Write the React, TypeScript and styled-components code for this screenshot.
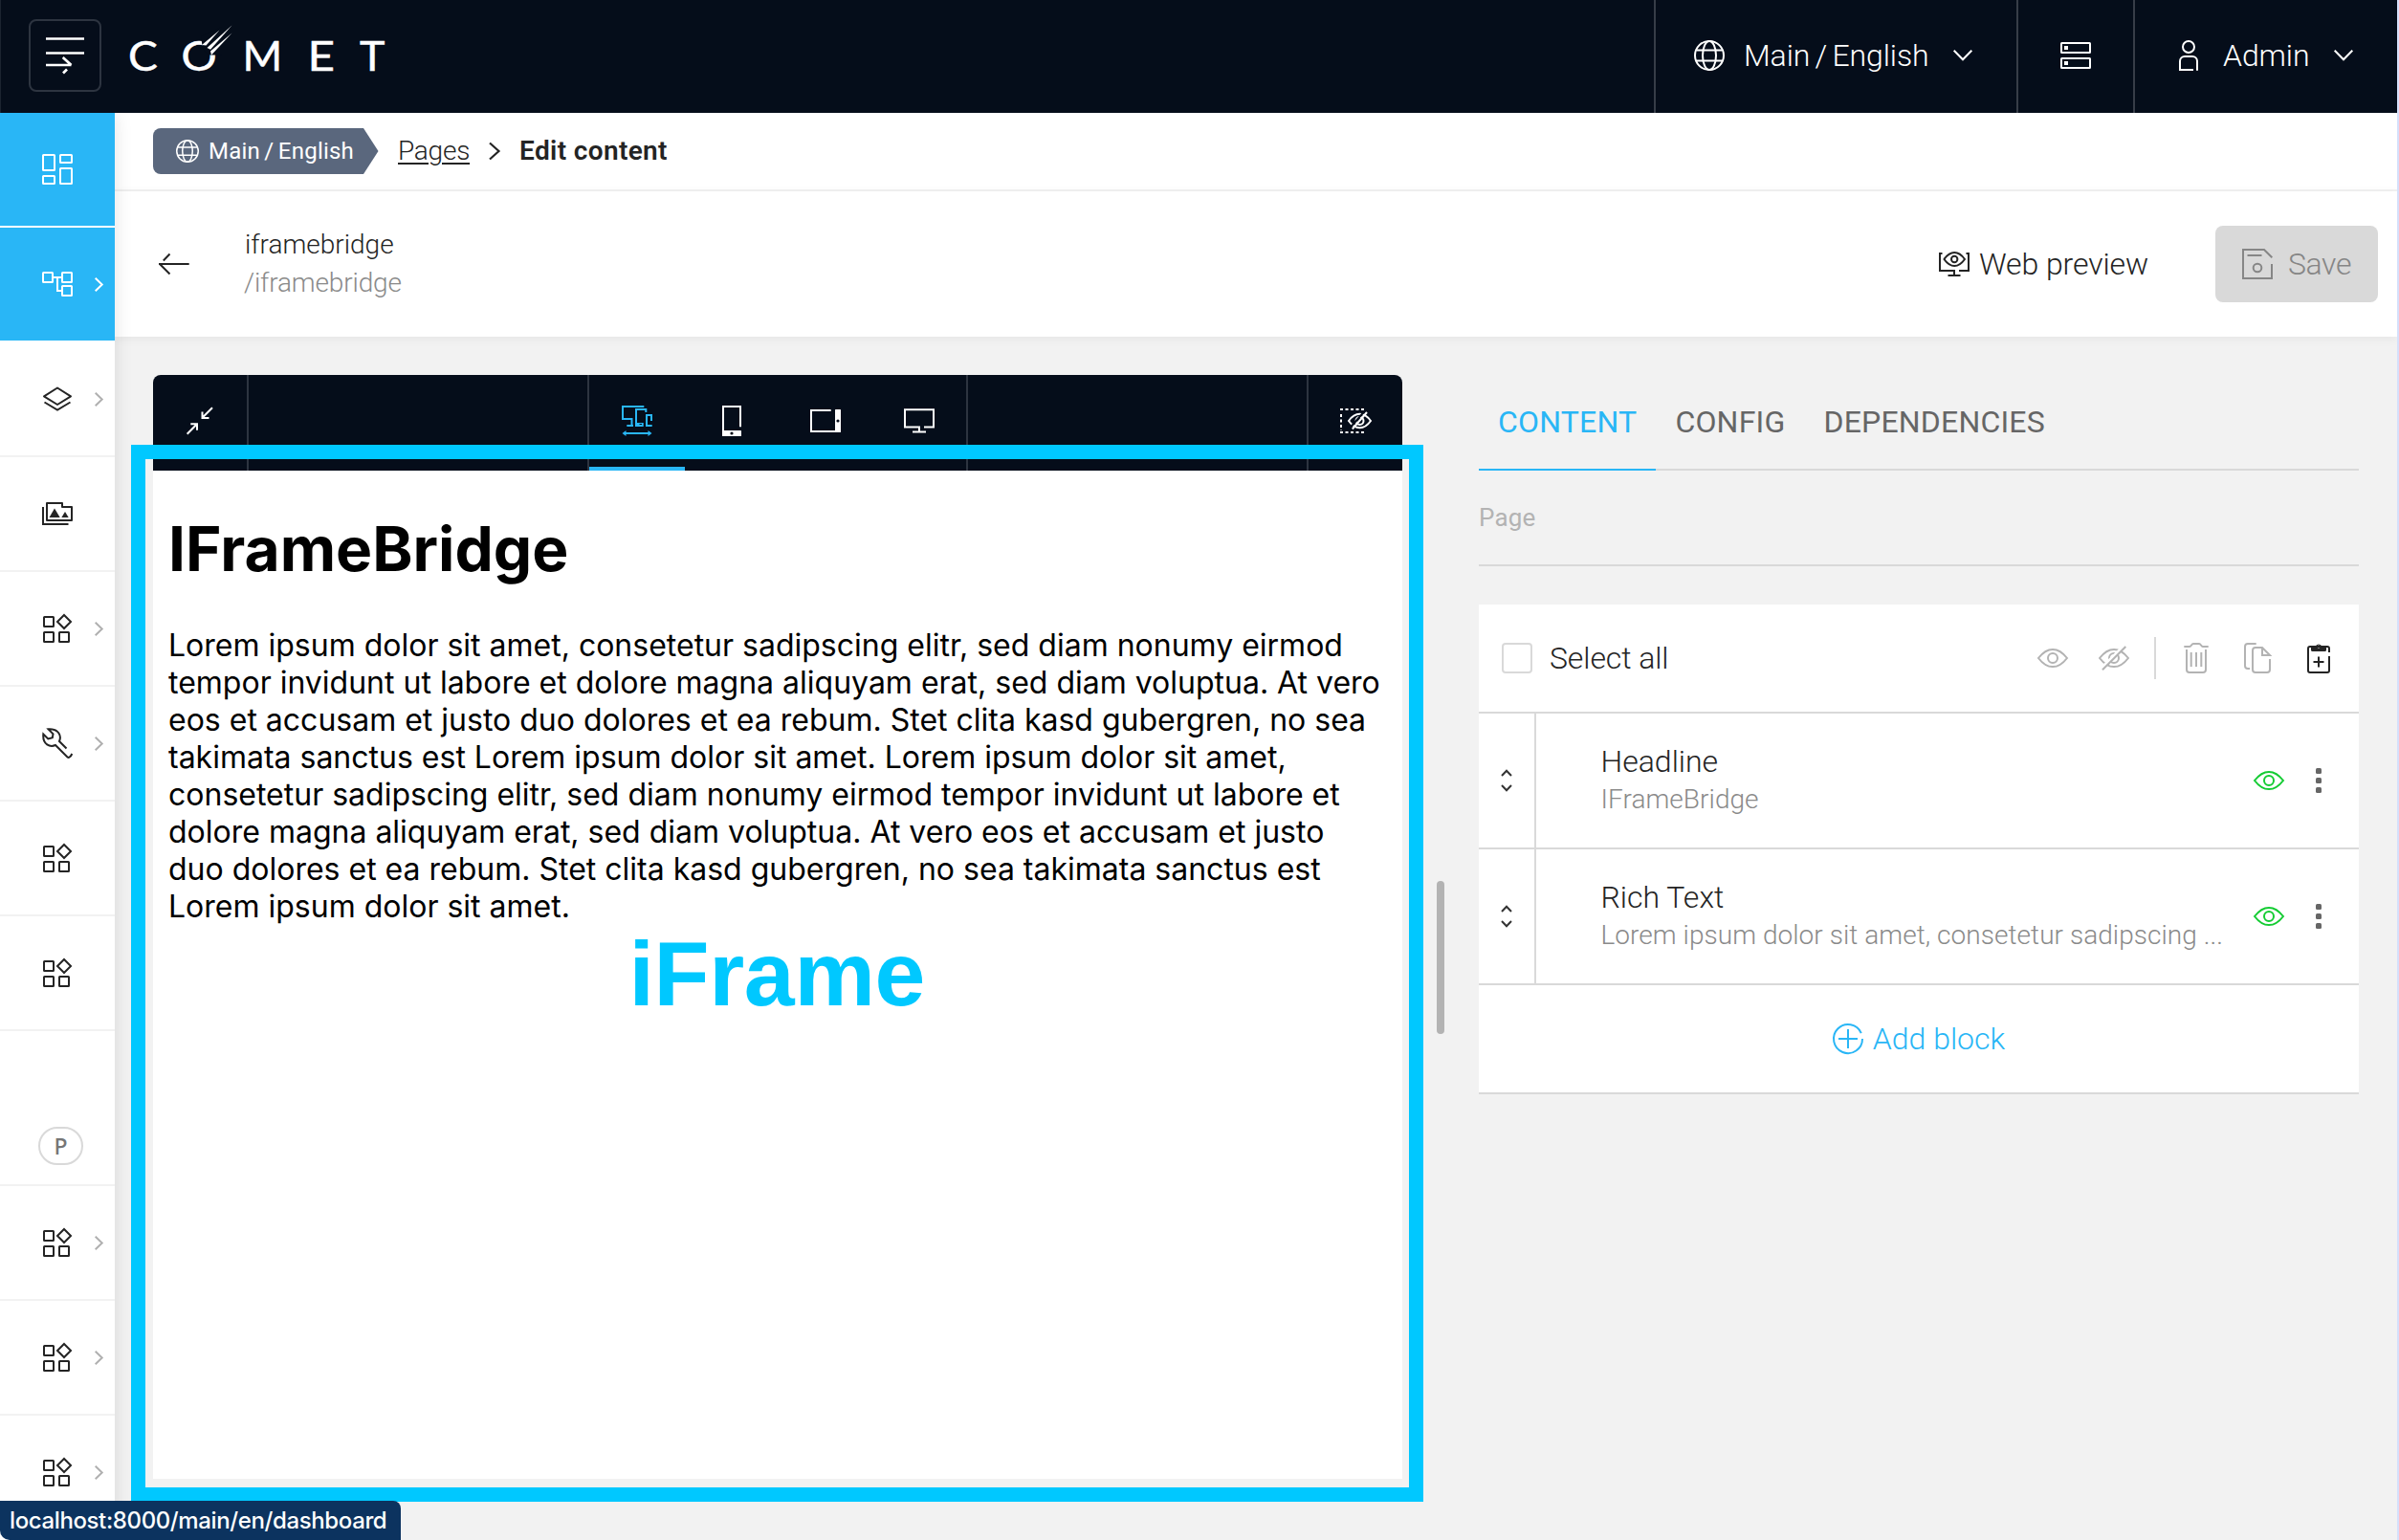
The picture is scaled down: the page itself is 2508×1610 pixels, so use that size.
import React from "react";
import styled, { createGlobalStyle } from "styled-components";

const color = {
  ink: "#050d1a",
  text: "#242424",
  muted: "#8a8a8a",
  line: "#d9d9d9",
  soft: "#f2f2f2",
  blue: "#29b6f6",
  cyan: "#00c8ff",
  disabled: "#b3b3b3",
};

const GlobalStyle = createGlobalStyle`
  *, *::before, *::after { box-sizing: border-box; }
  html, body { margin: 0; padding: 0; overflow: hidden; }
  body {
    font-family: Roboto, "Liberation Sans", sans-serif;
    font-weight: 300;
    color: ${color.text};
    background: ${color.soft};
  }
  h1, p { margin: 0; font-weight: inherit; }
`;

/* ---------- icons ---------- */

const Svg = styled.svg<{ $size?: number }>`
  display: block;
  flex: none;
  width: ${(p) => p.$size ?? 32}px;
  height: ${(p) => p.$size ?? 32}px;
  fill: none;
  stroke: currentColor;
  stroke-width: 2;
  overflow: visible;
  .solid { fill: currentColor; stroke: none; }
  .hole { fill: ${color.ink}; stroke: none; }
`;

type IconProps = { size?: number };

const Icon = ({ size, children }: IconProps & { children: React.ReactNode }) => (
  <Svg $size={size} viewBox="0 0 32 32">
    {children}
  </Svg>
);

const GlobeIcon = ({ size }: IconProps) => (
  <Icon size={size}>
    <circle cx="16" cy="16" r="15" />
    <ellipse cx="16" cy="16" rx="7" ry="15" />
    <path d="M2.4 10.5H29.6M2.4 21.5H29.6" />
  </Icon>
);
const DashboardIcon = () => (
  <Icon>
    <rect x="1" y="1" width="12" height="16" rx=".5" />
    <rect x="19" y="1" width="12" height="8" rx=".5" />
    <rect x="1" y="23" width="12" height="8" rx=".5" />
    <rect x="19" y="15" width="12" height="16" rx=".5" />
  </Icon>
);
const TreeIcon = () => (
  <Icon>
    <rect x="1" y="4" width="10" height="10" rx=".5" />
    <rect x="21" y="4" width="10" height="10" rx=".5" />
    <rect x="21" y="18" width="10" height="10" rx=".5" />
    <path d="M12 9H20M16 9V23H20" />
  </Icon>
);
const LayersIcon = () => (
  <Icon>
    <path d="M16 4.5L30 13.3L16 22L2 13.3Z" strokeLinejoin="round" />
    <path d="M2.5 19.5L16 27.7L29.5 19.5" />
  </Icon>
);
const AssetsIcon = () => (
  <Icon>
    <path d="M1 9V27H27.5" />
    <path d="M5 5H21V9H31V23H5Z" strokeLinejoin="round" />
    <path className="solid" d="M7.5 20L13 10.5L18.7 20Z" />
    <path className="solid" d="M20.3 20L24 14L27.7 20Z" />
  </Icon>
);
const BlocksIcon = () => (
  <Icon>
    <rect x="2" y="4" width="10" height="10" rx=".5" />
    <rect x="2" y="20" width="10" height="10" rx=".5" />
    <rect x="18" y="20" width="10" height="10" rx=".5" />
    <path d="M23 2L30 9L23 16L16 9Z" />
  </Icon>
);
const WrenchIcon = () => (
  <Icon>
    <path d="M25.5 21.5L18 14C20.5 8.5 17.5 .5 6.5 1.3L11.5 6.3L10.8 10.3L6.3 11.5L1.3 6.5C.3 17.5 8.5 20.5 14 18L26.7 30.7C28 31.5 30 30 31.3 27" />
  </Icon>
);
const EyeShape = () => (
  <>
    <path d="M1 16C6 9.5 11 6.9 16 6.9S26 9.5 31 16C26 22.5 21 25.1 16 25.1S6 22.5 1 16Z" />
    <circle cx="16" cy="16" r="5" />
  </>
);
const EyeIcon = () => (
  <Icon>
    <EyeShape />
  </Icon>
);
const EyeOffIcon = () => (
  <Icon>
    <mask id="eye-off-gap" maskUnits="userSpaceOnUse" x="0" y="0" width="32" height="32">
      <rect width="32" height="32" fill="#fff" stroke="none" />
      <path d="M2.6 26.9L27 2.6" stroke="#000" strokeWidth="3" />
    </mask>
    <g mask="url(#eye-off-gap)">
      <EyeShape />
    </g>
    <path d="M4 28.3L28.3 4" />
  </Icon>
);
const TrashIcon = () => (
  <Icon>
    <path d="M3.3 4H9C11 4 11 1 13 1H19C21 1 21 4 23 4H28.7" />
    <path d="M6 7V28A3 3 0 0 0 9 31H23A3 3 0 0 0 26 28V7" />
    <path d="M10.7 10V25M16 10V25M21.3 10V25" />
  </Icon>
);
const CopyIcon = () => (
  <Icon>
    <path d="M14.7 1H6A3 3 0 0 0 3 4V24A3 3 0 0 0 6 27H8" />
    <path d="M29 17V28A3 3 0 0 1 26 31H14A3 3 0 0 1 11 28V8A3 3 0 0 1 14 5H21L29 13H21V5" />
  </Icon>
);
const PasteIcon = () => (
  <Icon>
    <path d="M27 10V6A2 2 0 0 0 25 4H7A2 2 0 0 0 5 6V29A2 2 0 0 0 7 31H25A2 2 0 0 0 27 29V14" />
    <path
      className="solid"
      fillRule="evenodd"
      d="M8 4H12.7A3.4 3.4 0 0 1 19.3 4H24V7.5A1.5 1.5 0 0 1 22.5 9H9.5A1.5 1.5 0 0 1 8 7.5ZM16 2.6A1.5 1.5 0 1 0 16 5.6A1.5 1.5 0 1 0 16 2.6Z"
    />
    <path d="M16 14.5V25.5M10.5 20H21.5" />
  </Icon>
);
const ServerIcon = () => (
  <Icon>
    <rect x="1" y="3" width="30" height="10" rx=".5" />
    <rect x="1" y="19" width="30" height="10" rx=".5" />
    <rect className="solid" x="4" y="6" width="4" height="4" />
    <rect className="solid" x="4" y="22" width="4" height="4" />
  </Icon>
);
const UserIcon = () => (
  <Icon>
    <circle cx="16" cy="7" r="6" />
    <path d="M21 31H7V22A5 5 0 0 1 12 17H20A5 5 0 0 1 25 22V31.7" />
  </Icon>
);
const WebPreviewIcon = () => (
  <Icon>
    <path d="M3.5 5H1V23H16V28M9.5 28H22.5M21 23H31V5H28.5" />
    <path d="M5.5 11C9 6 12.5 4 16.2 4S23.5 6 27 11C23.5 16 20 18 16.2 18S9 16 5.5 11Z" />
    <circle cx="16.2" cy="11" r="3.2" />
  </Icon>
);
const SaveIcon = () => (
  <Icon>
    <path d="M31.3 9.3L23 1H1V31H31V16M5.5 7H20.5" />
    <circle cx="16" cy="20" r="4.3" />
  </Icon>
);
const BackIcon = () => (
  <Icon>
    <path d="M0 16H31.7M1 16L11.5 26.5M4.8 12.5L11.5 5.5" />
  </Icon>
);
const AddIcon = () => (
  <Icon>
    <path d="M31 16A15 15 0 1 1 29.8 10.2M16 6V26M6 16H26" />
  </Icon>
);
const CollapseIcon = () => (
  <Icon>
    <path d="M29 2.3L18.5 12.8M18.5 6.5V13H25.5M2.7 29.7L13 19.2M6.3 19.2H13V25.7" />
  </Icon>
);
const ResponsiveIcon = () => (
  <Icon>
    <path d="M23.3 1H1V14H10.5V21M5.3 21H12" />
    <path d="M25.3 7V4H15V21H22" />
    <path className="solid" fillRule="evenodd" d="M14.5 18H22.7V22H14.5ZM18.5 19H21V21.3H18.5Z" />
    <path d="M31 16V10H26V21H31.7" />
    <path d="M3 29H29" />
    <path className="solid" d="M.5 29L4.5 26V32ZM31.5 29L27.5 26V32Z" />
  </Icon>
);
const PhoneIcon = () => (
  <Icon>
    <path d="M25 22.3V1H7V28" />
    <rect className="solid" x="6" y="26" width="20" height="6" rx=".5" />
    <circle className="hole" cx="16" cy="29" r="1.6" />
  </Icon>
);
const TabletIcon = () => (
  <Icon>
    <path d="M21.7 5H1V27H27" />
    <rect className="solid" x="26" y="4" width="6" height="24" rx=".5" />
    <circle className="hole" cx="29" cy="16" r="1.6" />
  </Icon>
);
const DesktopIcon = () => (
  <Icon>
    <path d="M21 22.5H31V4.2H1V22.5H16V27.5M9 27.5H23" />
  </Icon>
);
const HiddenAreasIcon = () => (
  <Icon>
    <path d="M0 4H26M0 28H26" strokeDasharray="3 2.5" />
    <path d="M1 9V26" strokeDasharray="3 2.5" />
    <mask id="hidden-gap" maskUnits="userSpaceOnUse" x="0" y="0" width="34" height="32">
      <rect width="34" height="32" fill="#fff" stroke="none" />
      <path d="M11 22.5L25.5 6" stroke="#000" strokeWidth="2" />
    </mask>
    <g mask="url(#hidden-gap)">
      <path d="M9 16C12.5 11 16 8.8 20.5 8.8S28.5 11 32 16C28.5 21 25 23.2 20.5 23.2S12.5 21 9 16Z" />
      <circle cx="20.5" cy="16" r="4" />
    </g>
    <path d="M12.8 24.5L28 7" />
  </Icon>
);

const MenuSvg = styled.svg`
  display: block;
  width: 40px;
  height: 40px;
  fill: none;
  stroke: #fff;
  stroke-width: 2.7;
  overflow: visible;
`;
const LogoSvg = styled.svg`
  display: block;
  width: 280px;
  height: 64px;
  fill: #fff;
  font: 400 43px Lato, "Liberation Sans", sans-serif;
  text {
    stroke: #fff;
    stroke-width: 0.5;
  }
`;

const logoLetters: [string, number, number][] = [
  ["C", 9.9, 30.9],
  ["O", 65.6, 37.2],
  ["M", 129.6, 41.7],
  ["E", 197.6, 28.5],
  ["T", 252, 26.4],
];

const Logo = () => (
  <LogoSvg viewBox="0 0 280 64">
    {logoLetters.map(([letter, x, length]) => (
      <text key={letter} x={x} y="47.7" textLength={length} lengthAdjust="spacingAndGlyphs">
        {letter}
      </text>
    ))}
    <path fill={color.ink} d="M88 25L86 12L108 2L108 31.5L94 31.5Z" />
    <path d="M87 21L91.5 21.5L105.5 5.5Z" />
    <path d="M92.5 24L96 25.8L118.5 .5Z" />
    <path d="M96 27.5L97 31.5L118.5 8.5Z" />
  </LogoSvg>
);

const ChevronSvg = styled.svg<{ $w: number; $h: number; $tone?: string }>`
  display: block;
  flex: none;
  width: ${(p) => p.$w}px;
  height: ${(p) => p.$h}px;
  fill: none;
  stroke: ${(p) => p.$tone ?? "currentColor"};
  stroke-width: 2;
  overflow: visible;
`;
const ChevronDown = () => (
  <ChevronSvg $w={20} $h={12} viewBox="0 0 20 12">
    <path d="M.7 .7L10 10.3L19.3 .7" />
  </ChevronSvg>
);
const ChevronRight = ({ tone }: { tone?: string }) => (
  <ChevronSvg $w={9} $h={15} $tone={tone} viewBox="0 0 9 15">
    <path d="M.7 .7L7.7 7.5L.7 14.3" />
  </ChevronSvg>
);
const SortIcon = () => (
  <ChevronSvg $w={12} $h={24} viewBox="0 0 12 24">
    <path d="M1 7L6 1.8L11 7M1 17L6 22.2L11 17" />
  </ChevronSvg>
);

/* ---------- page frame ---------- */

const Page = styled.div`
  display: flex;
  flex-direction: column;
  width: 2508px;
  height: 1610px;
  border-right: 2px solid #d5e0fb;
  overflow: hidden;
  position: relative;
`;
const Header = styled.header`
  display: flex;
  align-items: stretch;
  flex: none;
  height: 118px;
  background: ${color.ink};
  color: #fff;
  border-left: 1px solid #1c2430;
`;
const HeaderStart = styled.div`
  display: flex;
  align-items: center;
  gap: 18px;
  flex: 1;
  padding: 0 0 2px 29px;
`;
const MenuButton = styled.div`
  display: flex;
  align-items: center;
  justify-content: center;
  width: 76px;
  height: 76px;
  border: 2px solid #2d3440;
  border-radius: 8px;
`;
const HeaderItem = styled.div<{ $width: number; $start: number }>`
  display: flex;
  align-items: center;
  width: ${(p) => p.$width}px;
  padding: 0 0 2px ${(p) => p.$start}px;
  border-left: 2px solid #373d48;
  font-size: 32px;
  line-height: 40px;
  white-space: nowrap;
`;
const HeaderLabel = styled.span<{ $width: number; $tight?: boolean }>`
  width: ${(p) => p.$width}px;
  margin-left: 20px;
  letter-spacing: -0.1px;
  word-spacing: ${(p) => (p.$tight ? "-2.4px" : "normal")};
`;
const Body = styled.div`
  display: flex;
  flex: 1;
  min-height: 0;
`;
const Sidebar = styled.nav`
  display: flex;
  flex-direction: column;
  flex: none;
  width: 120px;
  background: #fff;
  box-shadow: 0 0 18px rgba(0, 0, 0, 0.11);
  z-index: 1;
  clip-path: inset(0 -40px 0 0);
`;
const NavItem = styled.div<{ $active?: boolean }>`
  display: flex;
  align-items: center;
  flex: none;
  height: 120px;
  padding: 0 12px 0 44px;
  justify-content: space-between;
  border-bottom: 2px solid ${(p) => (p.$active ? "#fff" : color.soft)};
  background: ${(p) => (p.$active ? color.blue : "#fff")};
  background-clip: padding-box;
  color: ${(p) => (p.$active ? "#fff" : color.text)};
`;
const NavSection = styled.div`
  display: flex;
  align-items: flex-end;
  flex: none;
  height: 162px;
  padding: 0 0 20px 40px;
  border-bottom: 2px solid ${color.soft};
`;
const SectionBadge = styled.span`
  width: 47px;
  height: 40px;
  border: 2px solid ${color.line};
  border-radius: 20px;
  font: 500 23px/36px "Noto Sans", sans-serif;
  text-align: center;
  color: #767676;
`;
const Main = styled.main`
  display: flex;
  flex-direction: column;
  flex: 1;
  min-width: 0;
`;

/* ---------- breadcrumbs and toolbar ---------- */

const Breadcrumbs = styled.div`
  display: flex;
  align-items: center;
  flex: none;
  height: 82px;
  padding-left: 40px;
  background: #fff;
  border-bottom: 2px solid ${color.soft};
  font-size: 28px;
  line-height: 40px;
  white-space: nowrap;
`;
const ScopeChip = styled.div`
  display: flex;
  align-items: center;
  gap: 10px;
  width: 236px;
  height: 48px;
  padding-left: 24px;
  border-radius: 8px 0 0 8px;
  background: #5a677d;
  clip-path: polygon(0 0, 220px 0, 235.5px 50%, 220px 100%, 0 100%);
  color: #fff;
  font-size: 24px;
  font-weight: 400;
  letter-spacing: 0.22px;
  word-spacing: -1.8px;
`;
const CrumbLink = styled.a`
  margin: 0 20px;
  letter-spacing: -0.25px;
  text-decoration: underline;
  text-decoration-thickness: 2px;
  text-underline-offset: 3px;
`;
const CrumbCurrent = styled.span`
  margin-left: 20px;
  font-weight: 600;
  letter-spacing: 0.35px;
`;
const CrumbChevron = styled.svg`
  width: 12px;
  height: 18px;
  fill: none;
  stroke: currentColor;
  stroke-width: 2.2;
  overflow: visible;
`;
const Toolbar = styled.div`
  display: flex;
  align-items: center;
  flex: none;
  height: 152px;
  padding: 0 20px 0 46px;
  background: #fff;
  box-shadow: 0 2px 10px rgba(0, 0, 0, 0.06);
`;
const TitleBlock = styled.div`
  flex: 1;
  margin-left: 57px;
  font-size: 28px;
  line-height: 40px;
`;
const Title = styled.div`
  padding-left: 1px;
`;
const Muted = styled.div`
  color: ${color.muted};
`;
const PagePath = styled(Muted)`
  letter-spacing: -0.15px;
`;
const ToolButton = styled.div`
  display: flex;
  align-items: center;
  gap: 10px;
  width: 289px;
  font-size: 32px;
  line-height: 40px;
  letter-spacing: -0.1px;
`;
const SaveButton = styled.div`
  display: flex;
  align-items: center;
  gap: 16px;
  width: 170px;
  height: 80px;
  padding-left: 28px;
  border-radius: 8px;
  background: ${color.line};
  color: #868686;
  font-size: 32px;
  letter-spacing: -0.4px;
`;

/* ---------- preview ---------- */

const Workspace = styled.div`
  display: flex;
  flex: 1;
  min-height: 0;
  padding: 40px 40px 64px;
`;
const Preview = styled.section`
  display: flex;
  flex-direction: column;
  flex: none;
  width: 1306px;
`;
const DeviceBar = styled.div`
  display: flex;
  flex: none;
  height: 100px;
  border-radius: 8px 8px 0 0;
  background: ${color.ink};
`;
const BarCell = styled.div<{ $width: number; $divider?: boolean; $active?: boolean }>`
  display: flex;
  align-items: center;
  justify-content: center;
  flex: none;
  width: ${(p) => p.$width}px;
  border-right: ${(p) => (p.$divider ? "2px solid #2d3440" : "none")};
  padding-bottom: 4px;
  box-shadow: ${(p) => (p.$active ? `inset 0 -4px ${color.blue}` : "none")};
  color: ${(p) => (p.$active ? color.blue : "#fff")};
`;
const Site = styled.div`
  flex: 1;
  padding: 43px 16px 0;
  background: #fff;
  color: #000;
  font-family: Inter, "Liberation Sans", sans-serif;
  font-weight: 400;
`;
const SiteHeading = styled.h1`
  font-size: 64px;
  line-height: 77px;
  font-weight: 700;
`;
const SiteText = styled.p`
  margin-top: 43px;
  font-size: 32px;
  line-height: 39px;
  white-space: pre-line;
`;
const Splitter = styled.div`
  display: flex;
  justify-content: center;
  align-items: flex-start;
  width: 80px;
  padding-top: 529px;
  &::before {
    content: "";
    width: 8px;
    height: 160px;
    border-radius: 4px;
    background: ${color.disabled};
  }
`;

/* ---------- editor ---------- */

const Editor = styled.section`
  display: flex;
  flex-direction: column;
  width: 920px;
`;
const Tabs = styled.div`
  display: flex;
  height: 100px;
  box-shadow: inset 0 -2px ${color.line};
`;
const Tab = styled.div<{ $active?: boolean }>`
  display: flex;
  align-items: center;
  padding: 0 20px;
  border-bottom: 2px solid ${(p) => (p.$active ? color.blue : "transparent")};
  color: ${(p) => (p.$active ? color.blue : "#666")};
  font-size: 32px;
  font-weight: 450;
  letter-spacing: 0.2px;
`;
const FieldLabel = styled.div`
  height: 100px;
  border-bottom: 2px solid ${color.line};
  color: ${color.disabled};
  font-size: 26px;
  font-weight: 450;
  letter-spacing: 0.2px;
  line-height: 98px;
`;
const Card = styled.div`
  margin-top: 40px;
  background: #fff;
`;
const SelectRow = styled.div`
  display: flex;
  align-items: center;
  height: 114px;
  padding: 0 26px 0 24px;
  border-bottom: 2px solid ${color.line};
  font-size: 32px;
  letter-spacing: -0.1px;
`;
const Checkbox = styled.span`
  width: 32px;
  height: 32px;
  margin-right: 18px;
  border: 2px solid ${color.line};
  border-radius: 4px;
`;
const Actions = styled.div`
  display: flex;
  align-items: center;
  margin-left: auto;
  gap: 32px;
  color: ${color.disabled};
`;
const ActionDivider = styled.span`
  width: 2px;
  height: 44px;
  margin: 0 -6px;
  background: ${color.line};
`;
const EnabledAction = styled.span`
  color: ${color.text};
`;
const BlockRow = styled.div`
  display: flex;
  height: 142px;
  border-bottom: 2px solid ${color.line};
`;
const DragHandle = styled.div`
  display: flex;
  align-items: center;
  justify-content: center;
  width: 60px;
  border-right: 2px solid ${color.line};
  color: #333;
`;
const BlockInfo = styled.div`
  display: flex;
  flex-direction: column;
  justify-content: center;
  flex: 1;
  padding-left: 67.5px;
  font-size: 32px;
  line-height: 40px;
  white-space: nowrap;
`;
const BlockPreview = styled(Muted)`
  font-size: 28px;
  letter-spacing: 0.05px;
`;
const BlockActions = styled.div`
  display: flex;
  align-items: center;
  gap: 33px;
  padding-right: 39px;
  color: #14cc33;
`;
const Dots = styled.div`
  display: grid;
  gap: 4px;
  i {
    width: 6px;
    height: 6px;
    border-radius: 1.5px;
    background: #666;
  }
`;
const AddRow = styled.div`
  display: flex;
  align-items: center;
  justify-content: center;
  gap: 10px;
  height: 114px;
  border-bottom: 2px solid ${color.line};
  color: ${color.blue};
  font-size: 32px;
`;

/* ---------- overlays ---------- */

const FrameHighlight = styled.div`
  position: absolute;
  left: 136.5px;
  top: 464.5px;
  width: 1351.5px;
  height: 1105px;
  display: flex;
  align-items: center;
  justify-content: center;
  padding-top: 2px;
  border: 15px solid ${color.cyan};
  color: ${color.cyan};
  font: 700 95px/110px "Liberation Sans", Arial, sans-serif;
  letter-spacing: -0.3px;
  z-index: 2;
`;
const StatusBubble = styled.div`
  position: absolute;
  left: 0;
  bottom: 0;
  width: 419px;
  height: 41px;
  padding-left: 10px;
  border-radius: 0 8px 0 10px;
  background: #0c335f;
  color: #fff;
  font: 500 24px/41px Inter, sans-serif;
  letter-spacing: -0.38px;
  white-space: nowrap;
  z-index: 3;
`;

/* ---------- composition ---------- */

const NavEntry = ({ icon, more, active }: { icon: React.ReactNode; more?: boolean; active?: boolean }) => (
  <NavItem $active={active}>
    {icon}
    {more && <ChevronRight tone={active ? "#fff" : "#b0b0b0"} />}
  </NavItem>
);

const Block = ({ title, preview }: { title: string; preview: string }) => (
  <BlockRow>
    <DragHandle>
      <SortIcon />
    </DragHandle>
    <BlockInfo>
      <div>{title}</div>
      <BlockPreview>{preview}</BlockPreview>
    </BlockInfo>
    <BlockActions>
      <EyeIcon />
      <Dots>
        <i />
        <i />
        <i />
      </Dots>
    </BlockActions>
  </BlockRow>
);

const siteText = `Lorem ipsum dolor sit amet, consetetur sadipscing elitr, sed diam nonumy eirmod
tempor invidunt ut labore et dolore magna aliquyam erat, sed diam voluptua. At vero
eos et accusam et justo duo dolores et ea rebum. Stet clita kasd gubergren, no sea
takimata sanctus est Lorem ipsum dolor sit amet. Lorem ipsum dolor sit amet,
consetetur sadipscing elitr, sed diam nonumy eirmod tempor invidunt ut labore et
dolore magna aliquyam erat, sed diam voluptua. At vero eos et accusam et justo
duo dolores et ea rebum. Stet clita kasd gubergren, no sea takimata sanctus est
Lorem ipsum dolor sit amet.`;

export default function App() {
  return (
    <>
      <GlobalStyle />
      <Page>
        <Header>
          <HeaderStart>
            <MenuButton>
              <MenuSvg viewBox="0 0 40 40">
                <path d="M0 2.5H40M0 17.5H40M0 30H26.5M17.7 22L26.5 30M18 38.5L22 34.5" />
              </MenuSvg>
            </MenuButton>
            <Logo />
          </HeaderStart>
          <HeaderItem $width={379} $start={40}>
            <GlobeIcon />
            <HeaderLabel $width={219} $tight>
              Main / English
            </HeaderLabel>
            <ChevronDown />
          </HeaderItem>
          <HeaderItem $width={122} $start={44}>
            <ServerIcon />
          </HeaderItem>
          <HeaderItem $width={276} $start={40}>
            <UserIcon />
            <HeaderLabel $width={116}>Admin</HeaderLabel>
            <ChevronDown />
          </HeaderItem>
        </Header>
        <Body>
          <Sidebar>
            <NavEntry icon={<DashboardIcon />} active />
            <NavEntry icon={<TreeIcon />} active more />
            <NavEntry icon={<LayersIcon />} more />
            <NavEntry icon={<AssetsIcon />} />
            <NavEntry icon={<BlocksIcon />} more />
            <NavEntry icon={<WrenchIcon />} more />
            <NavEntry icon={<BlocksIcon />} />
            <NavEntry icon={<BlocksIcon />} />
            <NavSection>
              <SectionBadge>P</SectionBadge>
            </NavSection>
            <NavEntry icon={<BlocksIcon />} more />
            <NavEntry icon={<BlocksIcon />} more />
            <NavEntry icon={<BlocksIcon />} more />
          </Sidebar>
          <Main>
            <Breadcrumbs>
              <ScopeChip>
                <GlobeIcon size={24} />
                Main / English
              </ScopeChip>
              <CrumbLink>Pages</CrumbLink>
              <CrumbChevron viewBox="0 0 12 18">
                <path d="M1 .5L10.5 9L1 17.5" />
              </CrumbChevron>
              <CrumbCurrent>Edit content</CrumbCurrent>
            </Breadcrumbs>
            <Toolbar>
              <BackIcon />
              <TitleBlock>
                <Title>iframebridge</Title>
                <PagePath>/iframebridge</PagePath>
              </TitleBlock>
              <ToolButton>
                <WebPreviewIcon />
                Web preview
              </ToolButton>
              <SaveButton>
                <SaveIcon />
                Save
              </SaveButton>
            </Toolbar>
            <Workspace>
              <Preview>
                <DeviceBar>
                  <BarCell $width={100} $divider>
                    <CollapseIcon />
                  </BarCell>
                  <BarCell $width={356} $divider />
                  <BarCell $width={100} $active>
                    <ResponsiveIcon />
                  </BarCell>
                  <BarCell $width={98}>
                    <PhoneIcon />
                  </BarCell>
                  <BarCell $width={98}>
                    <TabletIcon />
                  </BarCell>
                  <BarCell $width={100} $divider>
                    <DesktopIcon />
                  </BarCell>
                  <BarCell $width={356} $divider />
                  <BarCell $width={98}>
                    <HiddenAreasIcon />
                  </BarCell>
                </DeviceBar>
                <Site>
                  <SiteHeading>IFrameBridge</SiteHeading>
                  <SiteText>{siteText}</SiteText>
                </Site>
              </Preview>
              <Splitter />
              <Editor>
                <Tabs>
                  <Tab $active>CONTENT</Tab>
                  <Tab>CONFIG</Tab>
                  <Tab>DEPENDENCIES</Tab>
                </Tabs>
                <FieldLabel>Page</FieldLabel>
                <Card>
                  <SelectRow>
                    <Checkbox />
                    Select all
                    <Actions>
                      <EyeIcon />
                      <EyeOffIcon />
                      <ActionDivider />
                      <TrashIcon />
                      <CopyIcon />
                      <EnabledAction>
                        <PasteIcon />
                      </EnabledAction>
                    </Actions>
                  </SelectRow>
                  <Block title="Headline" preview="IFrameBridge" />
                  <Block
                    title="Rich Text"
                    preview="Lorem ipsum dolor sit amet, consetetur sadipscing ..."
                  />
                  <AddRow>
                    <AddIcon />
                    Add block
                  </AddRow>
                </Card>
              </Editor>
            </Workspace>
          </Main>
        </Body>
        <FrameHighlight>iFrame</FrameHighlight>
        <StatusBubble>localhost:8000/main/en/dashboard</StatusBubble>
      </Page>
    </>
  );
}
